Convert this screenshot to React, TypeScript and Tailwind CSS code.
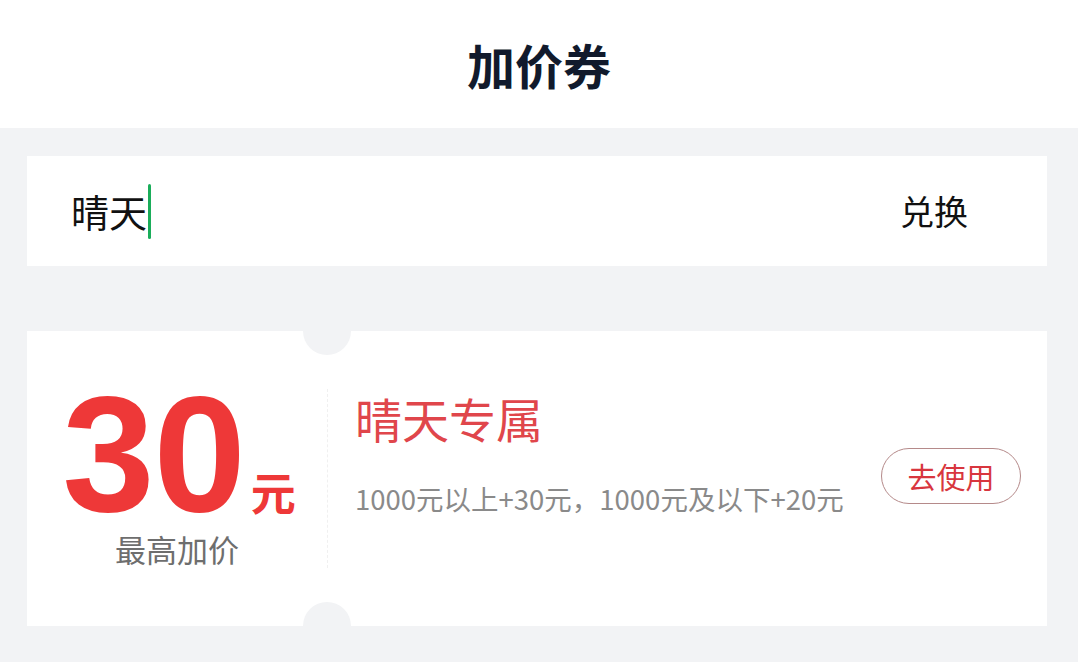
const cjk = "font-['Noto_Sans_CJK_SC',sans-serif]";

const Notch = ({ pos }: { pos: "top" | "bottom" }) => (
  <div
    className={`absolute left-[276px] h-[48px] w-[48px] rounded-full bg-[#f2f3f5] ${
      pos === "top" ? "-top-[24px]" : "-bottom-[24px]"
    }`}
  />
);

const App = () => {
  return (
    <div className={`min-h-[662px] w-[1078px] bg-[#f2f3f5] ${cjk}`}>
      <header className="flex h-[128px] items-center justify-center bg-white">
        <h1 className="text-[48px] font-bold leading-none text-[#111a2c]">加价券</h1>
      </header>

      <div className="ml-[27px] w-[1020px] pt-[28px]">
        {/* exchange input */}
        <div className="flex h-[110px] items-center justify-between bg-white pl-[44px] pr-[79px]">
          <div className="flex items-center">
            <span className="text-[38px] leading-none text-[#111]">晴天</span>
            <span className="ml-[1px] h-[55px] w-[3px] rounded-sm bg-[#1aad5a]" />
          </div>
          <button className="text-[34px] leading-none text-[#111]">兑换</button>
        </div>

        {/* coupon */}
        <div className="relative mt-[65px] flex h-[295px] overflow-hidden bg-white">
          <Notch pos="top" />
          <Notch pos="bottom" />

          <div className="flex w-[300px] flex-col items-center pt-[53px]">
            <div className="flex items-baseline pl-[4px]">
              <span className="font-['Liberation_Sans',sans-serif] text-[166px] font-bold leading-[140px] tracking-[-1px] text-[#ee3838]">
                30
              </span>
              <span className="ml-[6px] text-[45px] font-bold leading-none text-[#ee3838]">元</span>
            </div>
            <span className="mt-[9px] text-[31px] leading-none text-[#6e6e6e]">最高加价</span>
          </div>

          <div className="my-[58px] border-l border-dashed border-[#f0f0f0]" />

          <div className="flex flex-1 items-start justify-between pl-[27px] pr-[26px] pt-[63px]">
            <div className="flex flex-col">
              <span className="text-[47px] leading-none text-[#e0464b]">晴天专属</span>
              <span className="mt-[44px] text-[27.5px] leading-none text-[#8a8a8a]">
                1000元以上+30元，1000元及以下+20元
              </span>
            </div>
            <button className="mt-[54px] flex h-[56px] w-[140px] items-center justify-center rounded-full border border-[#b58a8a] text-[29px] leading-none text-[#d8363e]">
              去使用
            </button>
          </div>
        </div>
      </div>
    </div>
  );
};

export default App;
